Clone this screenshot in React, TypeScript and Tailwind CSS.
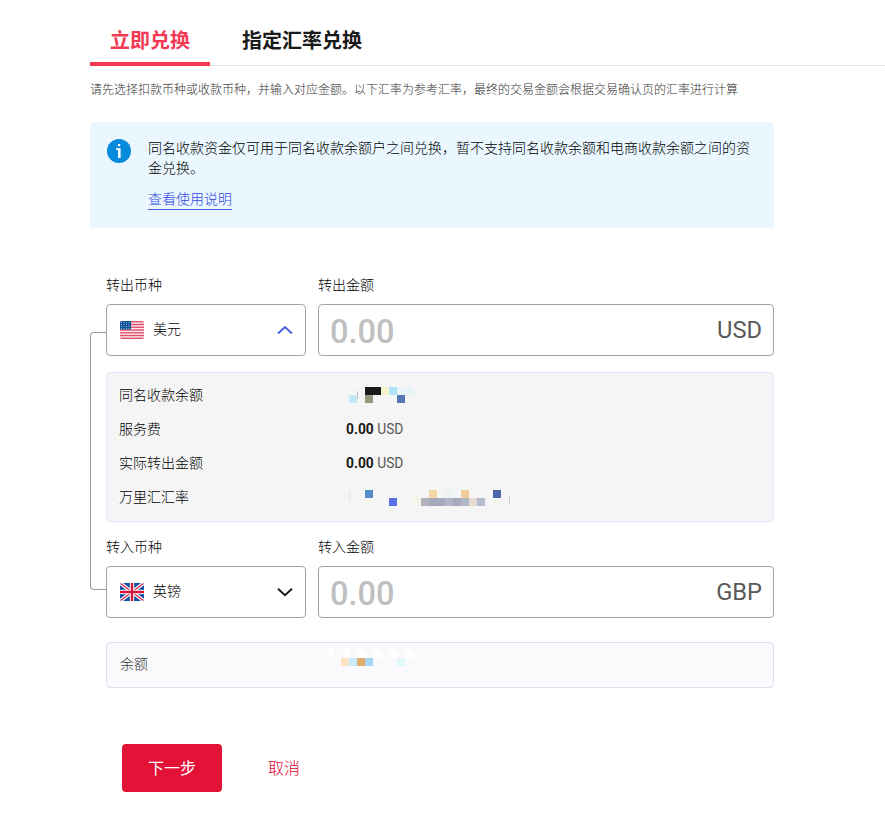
import { useState } from 'react';

type Cell = [x: number, y: number, width: number, color: string];

const sourceBalanceCells: Cell[] = [
  [16, 0, 16, '#1a1a1a'],
  [32, 0, 8, '#f5f5cc'],
  [40, 0, 8, '#b0e2f8'],
  [48, 0, 16, '#e8f4f8'],
  [0, 8, 8, '#c8e6fa'],
  [16, 8, 8, '#98977c'],
  [48, 8, 8, '#5278b4'],
  [8, 4, 1, '#c4c4c4'],
];

const rateCells: Cell[] = [
  [16, 0, 8, '#528fc8'],
  [80, 0, 8, '#f0d8a2'],
  [96, 0, 8, '#edf2f5'],
  [112, 0, 8, '#f0cc98'],
  [144, 0, 8, '#4c68a8'],
  [0, 2, 1, '#e2e2e2'],
  [160, 6, 1, '#d0d0d0'],
  [40, 8, 8, '#5a70e4'],
  [64, 8, 8, '#f5f5ea'],
  [72, 8, 8, '#b0b4bc'],
  [80, 8, 16, '#a5a9bc'],
  [96, 8, 8, '#b0b6c4'],
  [104, 8, 8, '#a5aabc'],
  [112, 8, 8, '#b0b8c6'],
  [120, 8, 8, '#e8d8d2'],
  [128, 8, 8, '#b4bccb'],
];

const targetBalanceCells: Cell[] = [
  [0, 0, 4, '#ffffff'],
  [16, 0, 4, '#ffffff'],
  [28, 0, 8, '#ffffff'],
  [44, 0, 8, '#ffffff'],
  [60, 0, 8, '#ffffff'],
  [76, 0, 8, '#ffffff'],
  [12, 8, 8, '#fae3c0'],
  [20, 8, 8, '#c8eafc'],
  [28, 8, 8, '#dfac6c'],
  [36, 8, 8, '#a4d8f5'],
  [68, 8, 8, '#e0fafc'],
];

const Mosaic = ({ cells, className }: { cells: Cell[]; className?: string }) => (
  <svg width="164" height="16" className={className} shapeRendering="crispEdges" aria-hidden="true">
    {cells.map(([x, y, width, color]) => (
      <rect key={`${x}-${y}`} x={x} y={y} width={width} height="8" fill={color} />
    ))}
  </svg>
);

const UsFlag = () => (
  <svg width="24" height="18" viewBox="0 0 24 18" className="rounded-[2px]">
    <rect width="24" height="18" fill="#fbe9ec" />
    {[0, 1, 2, 3, 4, 5, 6].map((i) => (
      <rect key={i} y={i * 2.77} width="24" height="1.385" fill="#e0506a" />
    ))}
    <rect width="11" height="8.5" fill="#0b4f94" />
    {[1.5, 3.5, 5.5, 7.5].map((y) =>
      [1.5, 4, 6.5, 9].map((x) => <circle key={`${x}-${y}`} cx={x} cy={y} r="0.5" fill="#c3d6e8" />)
    )}
  </svg>
);

const UkFlag = () => (
  <svg width="24" height="18" viewBox="0 0 24 18" className="rounded-[2px]">
    <rect width="24" height="18" fill="#0b4f9c" />
    <path d="M0 0l24 18M24 0L0 18" stroke="#fff" strokeWidth="3.6" />
    <path d="M0 0l24 18M24 0L0 18" stroke="#d8183a" strokeWidth="1.2" />
    <path d="M12 0v18M0 9h24" stroke="#fff" strokeWidth="4.4" />
    <path d="M12 0v18M0 9h24" stroke="#d8183a" strokeWidth="2.4" />
  </svg>
);

interface CurrencyFieldsProps {
  currencyLabel: string;
  amountLabel: string;
  flag: React.ReactNode;
  name: string;
  code: string;
  open?: boolean;
}

const CurrencyFields = ({ currencyLabel, amountLabel, flag, name, code, open }: CurrencyFieldsProps) => (
  <div className="flex gap-3">
    <div className="w-[200px]">
      <div className="h-5 leading-5">{currencyLabel}</div>
      <button
        type="button"
        className="mt-[10px] flex h-[52px] w-full items-center rounded-[4px] border border-[#a3a3a3] px-[13px]"
      >
        {flag}
        <span className="ml-[9px] mb-1">{name}</span>
        <svg width="16" height="10" viewBox="0 0 16 10" fill="none" className="ml-auto mr-[-1px]">
          <path
            d={open ? 'M1 8.5L8 2l7 6.5' : 'M1 1.8L8 8.2l7-6.4'}
            stroke={open ? '#4a5fe0' : '#1a1a1a'}
            strokeWidth="2"
          />
        </svg>
      </button>
    </div>
    <div className="w-[456px]">
      <div className="h-5 leading-5">{amountLabel}</div>
      <div className="mt-[10px] flex h-[52px] items-center justify-between rounded-[4px] border border-[#a3a3a3] pl-[11px] pr-[11px] font-[Roboto]">
        <span className="mt-[5px] text-[32.5px] font-medium text-[#bfbfbf]">0.00</span>
        <span className="mt-[2px] text-[23.7px] font-normal text-[#595959]">{code}</span>
      </div>
    </div>
  </div>
);

const Fee = () => (
  <span className="font-[Roboto] font-normal text-[#1a1a1a]">
    <b className="text-[13.8px] font-bold">0.00</b>{' '}
    <span className="text-[13.8px] text-[#595959]">USD</span>
  </span>
);

const tabs = ['立即兑换', '指定汇率兑换'];

const App = () => {
  const [activeTab, setActiveTab] = useState(0);

  return (
    <div className="h-[817px] overflow-hidden bg-white pl-[90px] font-['Noto_Sans_CJK_SC',sans-serif] text-[14px] font-light text-black">
      <div className="flex h-[66px] gap-3 border-b border-[#e5e5e5]">
        {tabs.map((tab, i) => (
          <button
            key={tab}
            type="button"
            onClick={() => setActiveTab(i)}
            className={`h-[66px] border-b-4 px-5 pt-[18px] text-[20px] font-bold ${
              activeTab === i ? 'border-[#f23a54] text-[#f23a54]' : 'border-transparent text-[#1a1a1a]'
            }`}
          >
            {tab}
          </button>
        ))}
      </div>

      <p className="mt-[13px] h-5 text-[12px] leading-5 text-[#333333]">
        请先选择扣款币种或收款币种，并输入对应金额。以下汇率为参考汇率，最终的交易金额会根据交易确认页的汇率进行计算
      </p>

      <div className="mt-[23px] flex h-[106px] w-[684px] rounded-[4px] bg-[#eaf7ff] pl-[17px] pt-[15px]">
        <svg width="24" height="24" viewBox="0 0 24 24" className="mt-[2px] shrink-0">
          <circle cx="12" cy="12" r="12" fill="#058bdc" />
          <path d="M11 5h2.2v2.2H11zM9 9.3h4.6V19H11v-8H9z" fill="#fff" />
        </svg>
        <div className="ml-[17px] w-[606px] leading-5">
          <p>同名收款资金仅可用于同名收款余额户之间兑换，暂不支持同名收款余额和电商收款余额之间的资金兑换。</p>
          <a className="mt-[11px] inline-block h-[22px] border-b border-[#4a5fe0] text-[#2f46dc]">查看使用说明</a>
        </div>
      </div>

      <div className="mt-[46px] flex">
        <div className="mt-[58px] h-[258px] w-4 rounded-l-[4px] border-y border-l border-[#999999]" />
        <div className="w-[668px]">
          <CurrencyFields
            currencyLabel="转出币种"
            amountLabel="转出金额"
            flag={<UsFlag />}
            name="美元"
            code="USD"
            open
          />

          <div className="mt-4 h-[150px] rounded-[4px] border border-[#e0e6fb] bg-[#f5f5f5] pr-[13px] pl-3 pt-[5px]">
            <div className="flex h-[34px] items-center">
              <span className="mb-[2px] w-[227px]">同名收款余额</span>
              <Mosaic cells={sourceBalanceCells} className="ml-[3px] mb-[1px]" />
            </div>
            <div className="flex h-[34px] items-center">
              <span className="mb-[2px] w-[227px]">服务费</span>
              <Fee />
            </div>
            <div className="flex h-[34px] items-center">
              <span className="mb-[2px] w-[227px]">实际转出金额</span>
              <Fee />
            </div>
            <div className="flex h-[34px] items-center">
              <span className="mb-[2px] w-[227px]">万里汇汇率</span>
              <Mosaic cells={rateCells} className="ml-[3px] mt-[2px]" />
            </div>
          </div>

          <div className="mt-[14px]">
            <CurrencyFields
              currencyLabel="转入币种"
              amountLabel="转入金额"
              flag={<UkFlag />}
              name="英镑"
              code="GBP"
            />
          </div>

          <div className="mt-6 flex h-[46px] items-center rounded-[4px] border border-[#dfddf0] bg-[#fafafc] px-[13px]">
            <span className="mb-1 w-[209px] text-[#333333]">余额</span>
            <Mosaic cells={targetBalanceCells} className="mb-[14px]" />
          </div>

          <div className="mt-14 flex h-12 items-center pl-4 text-[16px]">
            <button type="button" className="h-12 w-[100px] rounded-[4px] bg-[#e51238] pb-[2px] font-normal text-white">
              下一步
            </button>
            <button type="button" className="ml-[46px] pb-[3px] text-[#e00030]">
              取消
            </button>
          </div>
        </div>
      </div>
    </div>
  );
};

export default App;
